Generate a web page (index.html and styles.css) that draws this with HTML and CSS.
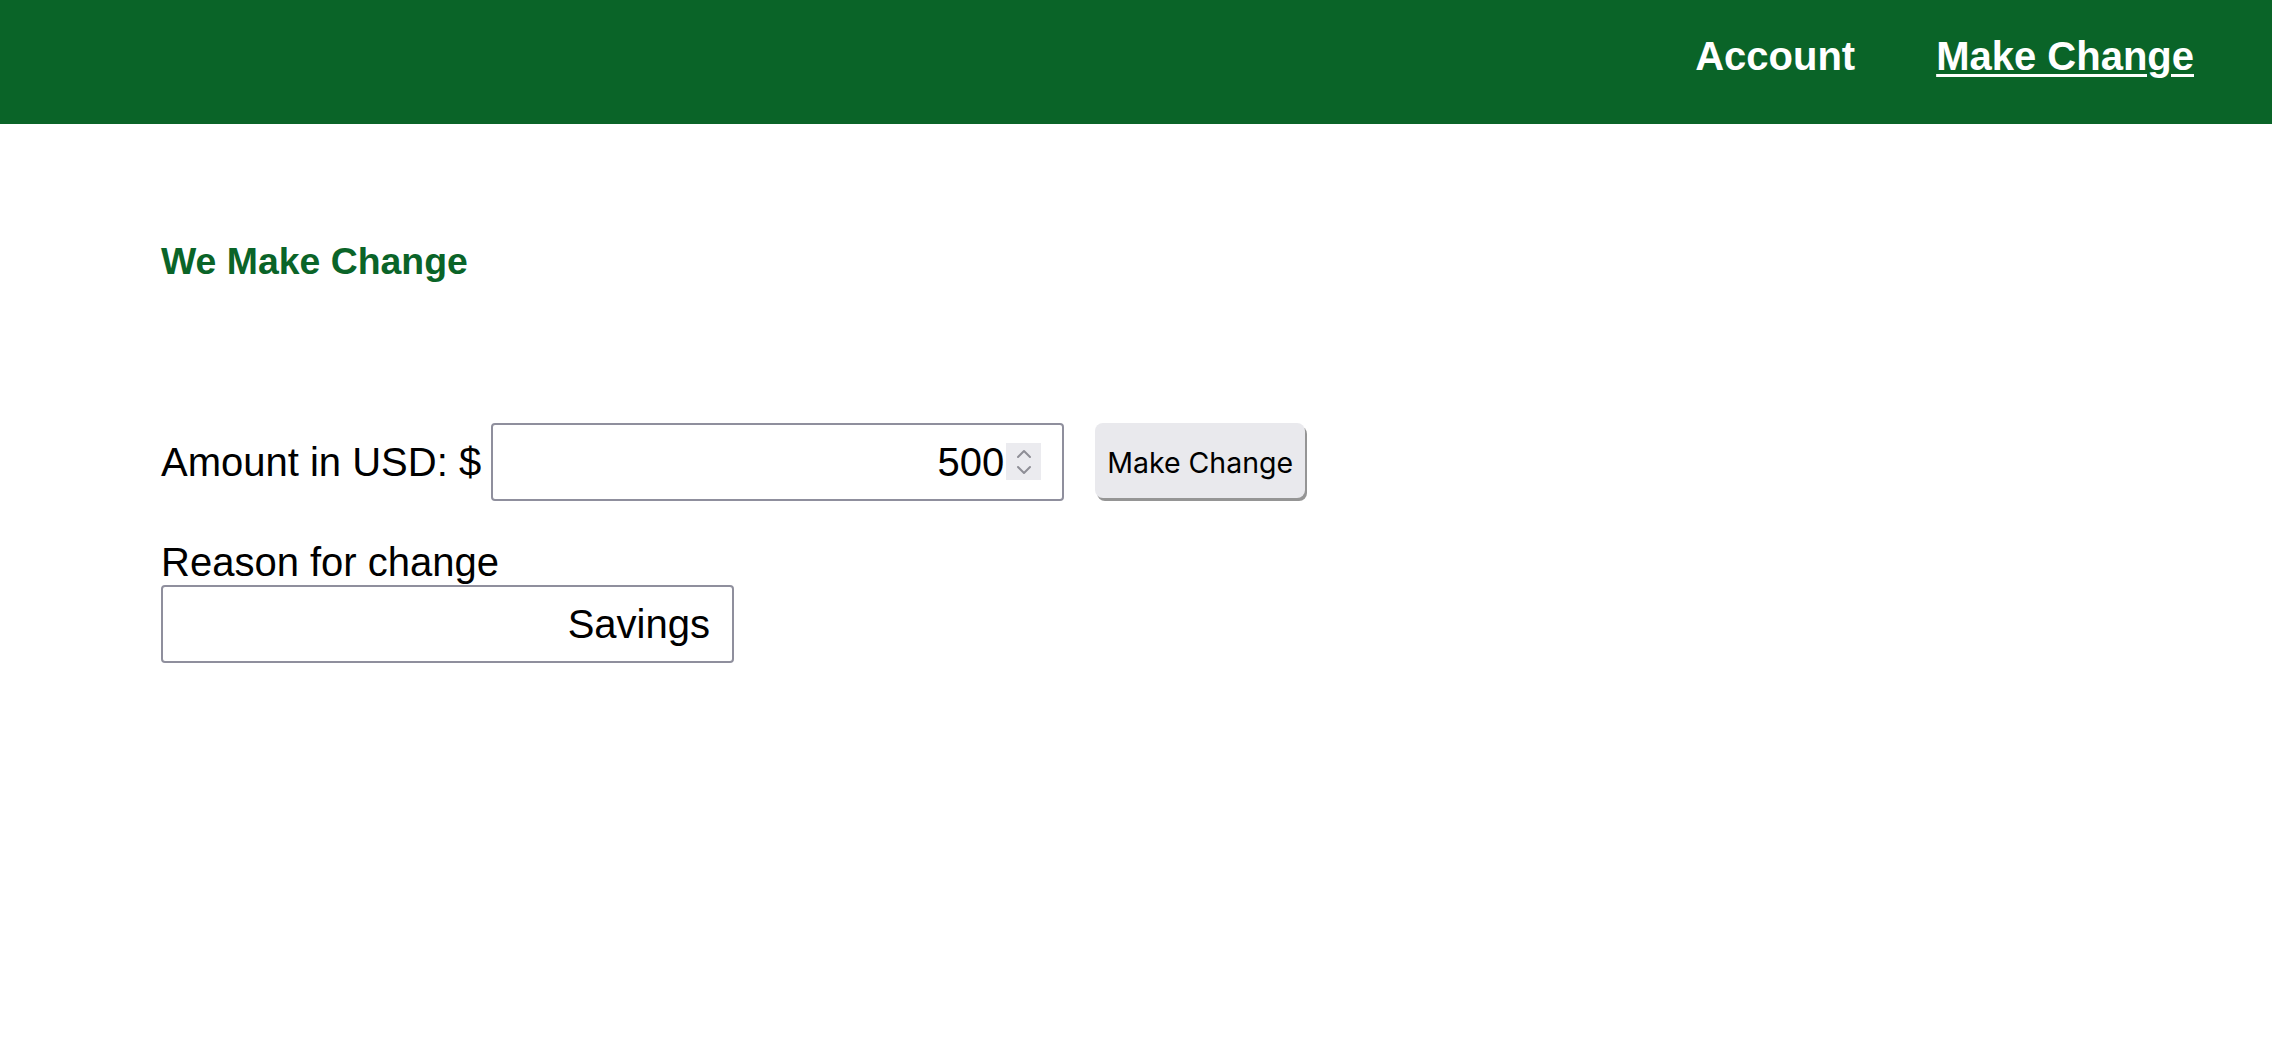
FILE: index.html
```html
<!DOCTYPE html>
<html lang="en">
<head>
<meta charset="utf-8">
<title>We Make Change</title>
<link rel="stylesheet" href="styles.css">
</head>
<body>
<header class="topbar">
  <nav class="nav">
    <a class="nav-link" href="#">Account</a>
    <a class="nav-link active" href="#">Make Change</a>
  </nav>
</header>
<main class="content">
  <h3 class="title">We Make Change</h3>
  <form class="change-form">
    <div class="amount-row">
      <label class="label" for="amount">Amount in USD: $</label>
      <span class="number-wrap">
        <input class="field number" id="amount" type="number" value="500">
        <span class="spinner"><svg width="20" height="30" viewBox="0 0 20 30"><path d="M4 10 L10 4 L16 10" fill="none" stroke="#8e8e96" stroke-width="2" stroke-linecap="round" stroke-linejoin="round"/><path d="M4 20 L10 26 L16 20" fill="none" stroke="#8e8e96" stroke-width="2" stroke-linecap="round" stroke-linejoin="round"/></svg></span>
      </span>
      <button class="btn" type="button">Make Change</button>
    </div>
    <div class="reason">
      <label class="label block" for="reason">Reason for change</label>
      <input class="field text" id="reason" type="text" value="Savings">
    </div>
  </form>
</main>
</body>
</html>
```
FILE: styles.css
```css
* { box-sizing: border-box; }
body {
  margin: 0;
  background: #ffffff;
  font-family: "Liberation Sans", Arial, sans-serif;
  color: #000;
}
.topbar {
  height: 124px;
  background: #0a6428;
  display: flex;
  justify-content: flex-end;
  align-items: flex-start;
  padding: 33px 78px 0 0;
}
.nav {
  display: flex;
  gap: 81px;
}
.nav-link {
  color: #ffffff;
  font-size: 40px;
  font-weight: 700;
  line-height: 46px;
  text-decoration: none;
}
.nav-link.active {
  text-decoration: underline;
  text-decoration-thickness: 3px;
  text-underline-offset: 4px;
}
.content {
  padding: 0 0 0 161px;
}
.title {
  margin: 0;
  padding-top: 116px;
  font-size: 37.4px;
  line-height: 43px;
  font-weight: 700;
  color: #0a6428;
}
.change-form {
  margin-top: 140px;
}
.amount-row {
  display: flex;
  align-items: center;
  height: 78px;
}
.label {
  font-size: 40px;
  line-height: 46px;
  margin-right: 10px;
}
.label.block {
  display: block;
  margin: 0;
}
.number-wrap {
  position: relative;
  display: inline-block;
}
.field {
  display: block;
  height: 78px;
  border: 2px solid #8f8f9d;
  border-radius: 4px;
  font-family: "Liberation Sans", Arial, sans-serif;
  font-size: 40px;
  text-align: right;
  color: #000;
  background: #fff;
  outline: none;
}
.field.number {
  width: 573px;
  padding: 0 58px 0 8px;
  -moz-appearance: textfield;
}
.field.number::-webkit-inner-spin-button,
.field.number::-webkit-outer-spin-button {
  -webkit-appearance: none;
  margin: 0;
}
.spinner {
  position: absolute;
  right: 23px;
  top: 20px;
  width: 35px;
  height: 37px;
  background: #ebebef;
  display: flex;
  align-items: center;
  justify-content: center;
}
.btn {
  margin-left: 31px;
  height: 75px;
  align-self: flex-start;
  padding: 3px 12px 0;
  border: none;
  border-radius: 8px;
  background: #e9e9ed;
  box-shadow: 2px 3px 0 0 #959595;
  font-family: Inter, "Liberation Sans", sans-serif;
  font-size: 28.5px;
  color: #000;
}
.reason {
  margin-top: 38px;
}
.field.text {
  width: 573px;
  padding: 0 22px 0 8px;
}
```
